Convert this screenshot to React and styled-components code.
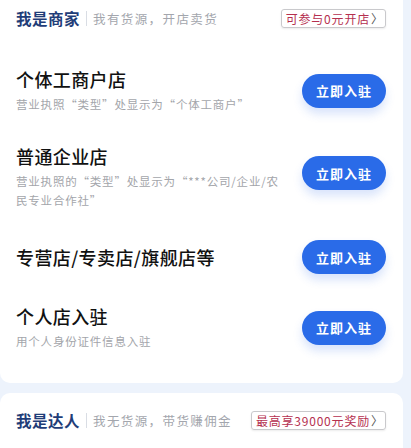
import React from 'react';
import styled, { createGlobalStyle } from 'styled-components';

const GlobalStyle = createGlobalStyle`
  html, body {
    margin: 0;
    padding: 0;
    background: #edf3fc;
    font-family: "Noto Sans CJK SC", "Noto Sans", sans-serif;
  }
`;

const Page = styled.div`
  width: 411px;
  height: 448px;
  overflow: hidden;
  padding-right: 8px;
  box-sizing: border-box;
  display: flex;
  flex-direction: column;
  gap: 10px;
`;

const Card = styled.div`
  background: #fff;
  border-radius: ${(p) => (p.$flushTop ? '0 0 10px 10px' : '10px')};
  padding: ${(p) => (p.$flushTop ? '0 17px 17px 16px' : '9px 17px 22px 16px')};
`;

const Header = styled.div`
  height: 36px;
  display: flex;
  align-items: center;
  margin-bottom: ${(p) => (p.$spaced ? '16px' : '0')};
`;

const Role = styled.span`
  font-size: 15.5px;
  font-weight: 700;
  color: #1f3d78;
  letter-spacing: 0.5px;
`;

const Divider = styled.span`
  width: 1px;
  height: 15px;
  background: #d9dde4;
  margin: 0 6px 0 6px;
`;

const Hint = styled.span`
  font-size: 12.5px;
  color: #a3a6ad;
  letter-spacing: 1.4px;
  flex: 1;
`;

const Badge = styled.span`
  display: inline-flex;
  align-items: center;
  height: 19px;
  padding: 0 2px 0 4px;
  border: 1px solid #c9c9cc;
  border-radius: 3px;
  font-size: 12px;
  color: #b5304f;
  letter-spacing: 0.8px;
  box-sizing: border-box;
  box-shadow: 0 1px 2px rgba(0, 0, 0, 0.08);
  white-space: nowrap;
`;

const Chevron = styled.span`
  color: #555;
  font-size: 12px;
  margin-left: 1px;
  letter-spacing: 0;
`;

const Row = styled.div`
  display: flex;
  align-items: center;
  justify-content: space-between;
  padding: 15px 0;
`;

const Info = styled.div`
  display: flex;
  flex-direction: column;
  gap: 4px;
  max-width: 272px;
`;

const Title = styled.div`
  font-size: 18px;
  line-height: 24px;
  font-weight: 500;
  color: #111;
  letter-spacing: 0.4px;
`;

const Sub = styled.div`
  font-size: 11.5px;
  line-height: 19px;
  color: #a3a5aa;
  letter-spacing: 0.8px;
`;

const JoinButton = styled.button`
  width: 84px;
  height: 34px;
  flex-shrink: 0;
  border: none;
  border-radius: 17px;
  background: #2a6be8;
  color: #fff;
  font-family: inherit;
  font-size: 13px;
  font-weight: 700;
  letter-spacing: 1px;
  box-shadow: 0 6px 10px rgba(42, 107, 232, 0.18);
  padding: 0;
  margin-bottom: ${(p) => (p.$lift ? '8px' : '0')};
`;

const shops = [
  { title: '个体工商户店', sub: '营业执照“类型”处显示为“个体工商户”' },
  { title: '普通企业店', sub: '营业执照的“类型”处显示为“***公司/企业/农民专业合作社”', lift: true },
  { title: '专营店/专卖店/旗舰店等' },
  { title: '个人店入驻', sub: '用个人身份证件信息入驻' },
];

const App = () => {
  return (
    <Page>
      <GlobalStyle />
      <Card $flushTop>
        <Header $spaced>
          <Role>我是商家</Role>
          <Divider />
          <Hint>我有货源，开店卖货</Hint>
          <Badge>
            可参与0元开店<Chevron>〉</Chevron>
          </Badge>
        </Header>
        {shops.map((s) => (
          <Row key={s.title}>
            <Info>
              <Title>{s.title}</Title>
              {s.sub && <Sub>{s.sub}</Sub>}
            </Info>
            <JoinButton $lift={s.lift}>立即入驻</JoinButton>
          </Row>
        ))}
      </Card>
      <Card>
        <Header>
          <Role>我是达人</Role>
          <Divider />
          <Hint>我无货源，带货赚佣金</Hint>
          <Badge>
            最高享39000元奖励<Chevron>〉</Chevron>
          </Badge>
        </Header>
      </Card>
    </Page>
  );
};

export default App;
